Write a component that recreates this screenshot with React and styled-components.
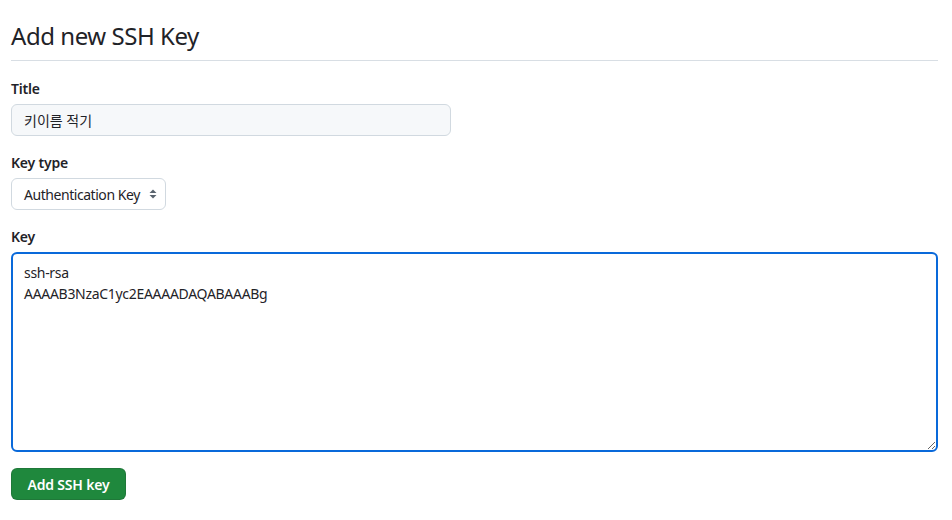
import React, { useEffect, useRef } from "react";
import styled, { createGlobalStyle } from "styled-components";

const GlobalStyle = createGlobalStyle`
  body {
    margin: 0;
    background: #ffffff;
    font-family: "Segoe UI", "Noto Sans", "Noto Sans CJK KR", sans-serif;
    color: #1f2328;
  }
`;

function App() {
    const keyRef = useRef(null);

    useEffect(() => {
        if (keyRef.current) {
            keyRef.current.focus();
            keyRef.current.setSelectionRange(8, 8);
        }
    }, []);

    return (
        <Page>
            <GlobalStyle />
            <Heading>
                <h2>Add new SSH Key</h2>
            </Heading>

            <Form onSubmit={(e) => e.preventDefault()}>
                <Field>
                    <Label>Title</Label>
                    <TextInput type="text" defaultValue="키이름 적기" />
                </Field>

                <Field>
                    <Label>Key type</Label>
                    <SelectBox>
                        <span>Authentication Key</span>
                        <svg width="10" height="14" viewBox="0 0 10 14">
                            <path d="M5 2.5 L8.5 6 H1.5 Z" fill="#59636e" />
                            <path d="M5 11.5 L8.5 8 H1.5 Z" fill="#59636e" />
                        </svg>
                    </SelectBox>
                </Field>

                <Field>
                    <Label>Key</Label>
                    <KeyArea
                        ref={keyRef}
                        spellCheck={false}
                        defaultValue={"ssh-rsa\nAAAAB3NzaC1yc2EAAAADAQABAAABg"}
                    />
                </Field>

                <Submit type="submit">Add SSH key</Submit>
            </Form>
        </Page>
    );
}

const Page = styled.div`
    padding: 0 14px 0 11px;
`;

const Heading = styled.div`
    margin-top: 18px;
    padding-bottom: 6px;
    border-bottom: 1px solid #d8dee4;

    h2 {
        margin: 0;
        font-size: 24px;
        font-weight: 400;
        line-height: 36px;
        letter-spacing: -0.45px;
        color: #1f2328;
    }
`;

const Form = styled.form`
    display: flex;
    flex-direction: column;
    align-items: flex-start;
    padding-top: 17px;
    gap: 16px;
`;

const Field = styled.div`
    display: flex;
    flex-direction: column;
    gap: 5px;
    width: 100%;
`;

const Label = styled.label`
    font-size: 14px;
    font-weight: 600;
    line-height: 21px;
    letter-spacing: -0.2px;
    color: #1f2328;
`;

const TextInput = styled.input`
    box-sizing: border-box;
    width: 440px;
    height: 32px;
    padding: 0 12px;
    border: 1px solid #d1d9e0;
    border-radius: 6px;
    background: #f6f8fa;
    font-family: "Segoe UI", "Noto Sans", "Noto Sans CJK KR", sans-serif;
    font-size: 14px;
    color: #1f2328;
    outline: none;
`;

const SelectBox = styled.div`
    box-sizing: border-box;
    width: 155px;
    height: 32px;
    display: flex;
    align-items: center;
    justify-content: space-between;
    padding: 0 7px 0 12px;
    border: 1px solid #d1d9e0;
    border-radius: 6px;
    background: #ffffff;
    font-size: 14px;
    letter-spacing: -0.45px;
    color: #1f2328;
`;

const KeyArea = styled.textarea`
    box-sizing: border-box;
    width: 100%;
    height: 200px;
    padding: 8px 11px;
    border: 2px solid #0969da;
    border-radius: 6px;
    background: #ffffff;
    font-family: "Segoe UI", "Noto Sans", "Noto Sans CJK KR", sans-serif;
    font-size: 14px;
    line-height: 21px;
    letter-spacing: -0.3px;
    color: #1f2328;
    caret-color: #1f2328;
    outline: none;
    resize: vertical;
`;

const Submit = styled.button`
    width: 115px;
    height: 32px;
    border: 1px solid rgba(31, 35, 40, 0.15);
    border-radius: 6px;
    background: #1f883d;
    color: #ffffff;
    font-family: "Segoe UI", "Noto Sans", sans-serif;
    font-size: 14px;
    font-weight: 600;
    letter-spacing: -0.2px;
    cursor: pointer;
`;

export default App;
